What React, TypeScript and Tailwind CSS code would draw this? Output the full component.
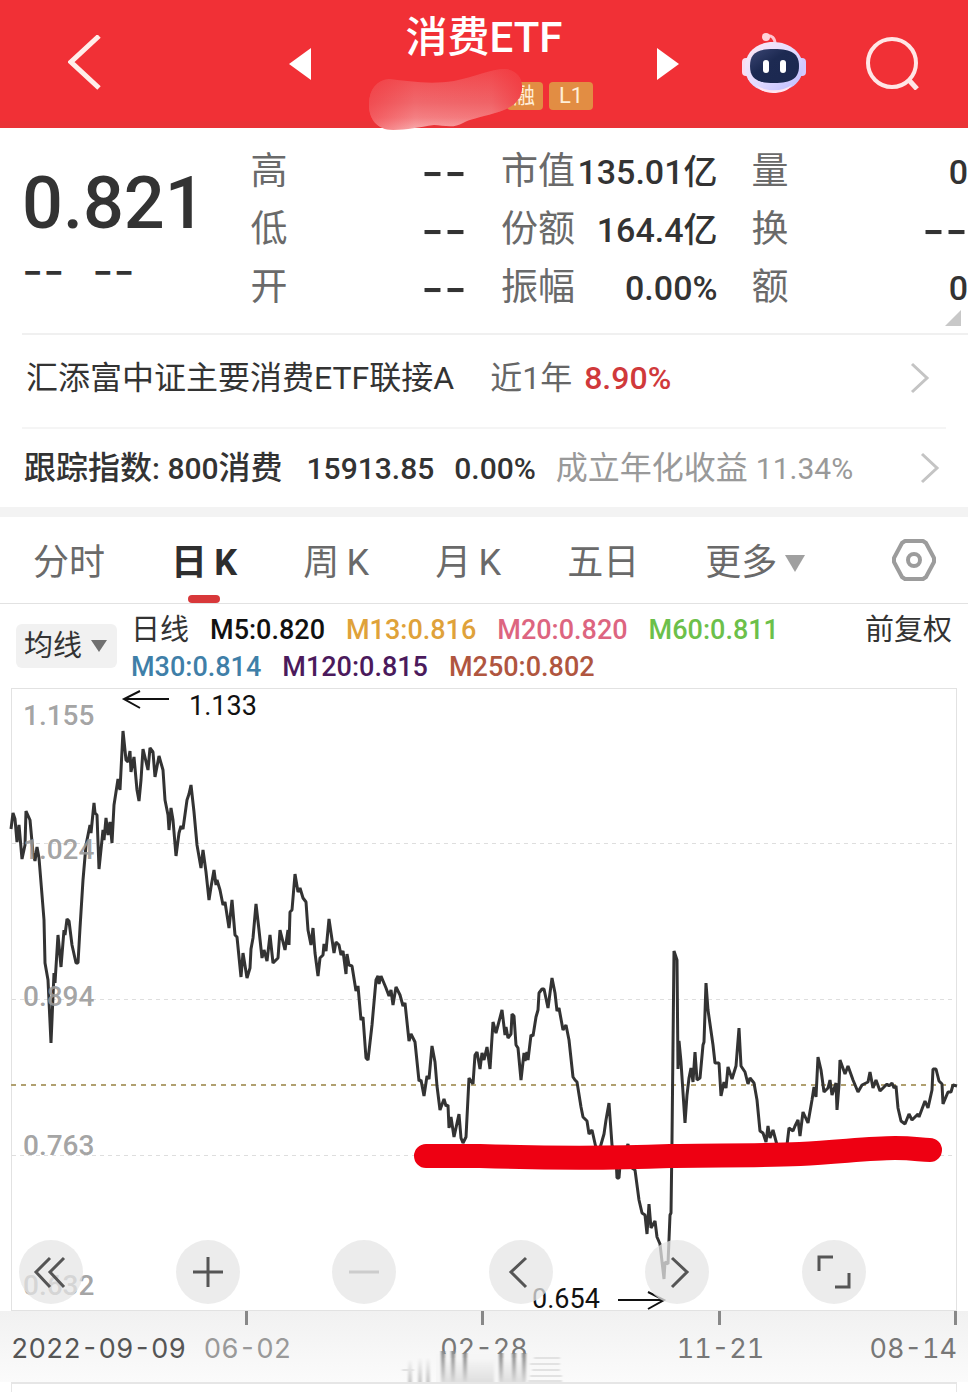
import React, { useState } from 'react';

interface Stat {
  label: string;
  value: string;
}

const statColumns: Stat[][] = [
  [
    { label: '高', value: '--' },
    { label: '低', value: '--' },
    { label: '开', value: '--' },
  ],
  [
    { label: '市值', value: '135.01亿' },
    { label: '份额', value: '164.4亿' },
    { label: '振幅', value: '0.00%' },
  ],
  [
    { label: '量', value: '0' },
    { label: '换', value: '--' },
    { label: '额', value: '0' },
  ],
];

const tabs = ['分时', '日 K', '周 K', '月 K', '五日'];

const averages = [
  [
    { text: 'M5:0.820', color: 'text-[#111111]' },
    { text: 'M13:0.816', color: 'text-[#dfa23a]' },
    { text: 'M20:0.820', color: 'text-[#dd6580]' },
    { text: 'M60:0.811', color: 'text-[#6cc04a]' },
  ],
  [
    { text: 'M30:0.814', color: 'text-[#3f7fa8]' },
    { text: 'M120:0.815', color: 'text-[#4b1a5c]' },
    { text: 'M250:0.802', color: 'text-[#b0563f]' },
  ],
];

const axisLabels = [
  { y: 725, text: '1.155' },
  { y: 859, text: '1.024' },
  { y: 1006, text: '0.894' },
  { y: 1155, text: '0.763' },
  { y: 1295, text: '0.632' },
];

const pricePoints = `
11,829 13,813 15,819 17,842 19,825 22,859 25,845 26,811 30,820 33,853 35,861 37,847 39,858 42,895 44,920 45,963
48,980 51,1043 54,973 55,983 58,935 61,967 64,930 65,935 67,919 69,921 72,945 76,963 78,963 80,928 83,880 86,845
90,825 91,833 94,803 95,813 97,815 99,869 103,830 104,840 106,818 108,835 110,822 112,843 114,805 118,779 120,790
123,731 126,760 128,762 130,751 131,772 134,757 137,790 139,801 141,780 143,749 148,770 150,748 153,752 155,777
159,756 163,770 165,800 168,815 169,830 171,808 173,820 176,856 179,833 181,826 183,829 187,800 189,794 191,785
194,812 197,845 201,868 203,850 206,872 209,900 211,887 214,870 216,885 217,880 220,890 223,905 225,902 229,928
232,900 235,935 237,937 241,977 243,953 247,978 250,968 251,949 253,938 256,904 259,930 262,958 264,950 267,961
270,935 273,963 276,960 278,958 280,930 285,950 288,930 289,945 290,912 292,910 295,874 298,892 300,888 303,898
306,902 308,930 311,945 313,928 315,953 318,976 320,958 323,955 324,944 326,951 329,919 334,953 336,942 339,945
341,955 343,951 346,974 347,954 349,965 352,966 356,991 358,986 361,1020 363,1017 366,1058 368,1060 372,1025
376,980 378,976 379,984 381,976 386,988 389,996 391,990 393,1005 396,987 400,995 403,1006 405,1003 409,1041
411,1034 415,1042 419,1081 421,1080 424,1096 427,1076 429,1079 432,1046 435,1062 437,1086 440,1110 444,1099
446,1106 448,1105 449,1128 451,1117 454,1137 459,1114 461,1138 463,1143 466,1137 469,1078 473,1084 475,1055
477,1052 480,1069 482,1053 484,1060 487,1047 490,1069 493,1022 496,1033 502,1010 505,1035 506,1027 508,1038
511,1034 512,1014 514,1016 516,1045 518,1048 521,1080 524,1053 525,1061 527,1052 528,1060 531,1035 533,1036
536,1017 538,1010 539,993 542,989 544,989 548,1008 552,978 555,993 557,1011 559,1008 563,1030 566,1025 569,1040
573,1077 575,1080 577,1082 581,1107 583,1117 587,1121 589,1134 592,1130 596,1148 600,1148 604,1134 606,1120
609,1103 612,1145 616,1158 617,1178 619,1178 620,1165 628,1144 632,1168 635,1170 639,1200 642,1213 645,1215
647,1234 649,1204 651,1228 655,1221 657,1237 660,1244 664,1279 665,1262 668,1264 670,1215 671,1213 672,1140
674,951 677,960 678,1069 679,1041 681,1062 685,1123 687,1095 689,1078 691,1068 693,1082 695,1052 697,1080
700,1078 703,1045 704,1042 706,983 708,1010 710,1024 713,1045 715,1063 719,1063 721,1096 724,1082 726,1088
728,1067 732,1079 736,1066 739,1028 741,1066 745,1072 748,1084 750,1078 754,1083 757,1100 760,1131 763,1133
766,1142 768,1126 770,1138 773,1130 777,1145 787,1145 789,1128 793,1131 795,1126 798,1120 800,1136 803,1112
808,1123 812,1100 814,1087 816,1097 818,1057 821,1070 824,1092 828,1088 830,1080 832,1095 836,1083 837,1110
839,1085 840,1060 845,1074 848,1066 853,1080 858,1092 862,1085 868,1082 870,1072 873,1088 876,1080 880,1091
887,1084 889,1086 892,1083 894,1088 896,1086 898,1108 901,1121 905,1124 909,1114 912,1120 918,1114 919,1117
925,1101 928,1108 932,1090 933,1069 936,1069 939,1081 942,1084 943,1104 948,1092 951,1092 953,1085 957,1086`;

const controls = [
  { name: '最早', d: 'M-1 -14 L-15 0 L-1 15 M13 -14 L-1 0 L13 15', muted: false },
  { name: '放大', d: 'M-15 0 H15 M0 -15 V15', muted: false },
  { name: '缩小', d: 'M-15 0 H15', muted: true },
  { name: '左移', d: 'M5 -14 L-10 0 L5 15', muted: false },
  { name: '右移', d: 'M-5 -14 L10 0 L-5 15', muted: false },
  { name: '全屏', d: 'M-15 -1 V-15 H-1 M15 1 V15 H1', muted: false },
];

const Robot = () => (
  <svg width="64" height="60" viewBox="0 0 64 60">
    <defs>
      <linearGradient id="shell" x1="0" y1="0" x2="1" y2="1">
        <stop offset="0" stopColor="#ffe9f3" />
        <stop offset="0.5" stopColor="#e3dcff" />
        <stop offset="1" stopColor="#b9b8ff" />
      </linearGradient>
      <linearGradient id="visor" x1="0" y1="0" x2="1" y2="1">
        <stop offset="0" stopColor="#3b4674" />
        <stop offset="0.4" stopColor="#1d2a52" />
        <stop offset="1" stopColor="#1b2850" />
      </linearGradient>
    </defs>
    <path d="M24 3 C30 2 33 5 33 11" fill="none" stroke="#ffc4cf" strokeWidth="3" />
    <circle cx="24" cy="4" r="4" fill="#ffd3da" />
    <rect x="0" y="25" width="9" height="18" rx="4" fill="#f9dcf0" />
    <rect x="55" y="25" width="9" height="18" rx="4" fill="#d4c8ff" />
    <path d="M31 9 C48 9 61 20 61 34 C61 49 48 59 31 59 C14 59 3 49 3 34 C3 20 14 9 31 9Z" fill="url(#shell)" />
    <path d="M14 52 C24 59 40 59 50 52 C46 58 39 60 31 60 C24 60 18 58 14 52Z" fill="#ffe4f0" />
    <path d="M32 16 C50 16 57 21 57 33 C57 45 50 50 32 50 C14 50 8 45 8 33 C8 21 14 16 32 16Z" fill="url(#visor)" />
    <rect x="21" y="27" width="6" height="13" rx="3" fill="#fff" />
    <rect x="38" y="27" width="6" height="13" rx="3" fill="#fff" />
  </svg>
);

const Chevron = ({ className = '' }: { className?: string }) => (
  <svg width="20" height="32" viewBox="0 0 20 32" className={className}>
    <path d="M2 2 L17 16 L2 30" fill="none" stroke="#c4c4c4" strokeWidth="3" />
  </svg>
);

const StatValue = ({ value }: { value: string }) =>
  value === '--' ? (
    <dd className="font-['Inter',sans-serif] text-[50px]">{value}</dd>
  ) : (
    <dd className="text-[34px] font-medium">{value}</dd>
  );

const Header = () => (
  <header className="relative grid h-32 grid-cols-[1fr_390px_1fr] items-center bg-[linear-gradient(#f13036_120px,#ea3337_122px)] text-white">
    <div className="pl-[68px]">
      <button aria-label="返回" className="block">
        <svg width="34" height="58" viewBox="0 0 34 58">
          <path d="M31 1 L3 27 L31 53" fill="none" stroke="#ffeeea" strokeWidth="5" />
        </svg>
      </button>
    </div>
    <div className="flex items-center justify-between">
      <button aria-label="上一个">
        <svg width="22" height="32" viewBox="0 0 22 32">
          <path d="M22 0 V32 L0 16Z" fill="#fff" />
        </svg>
      </button>
      <div className="flex flex-col items-center gap-5 pb-1">
        <h1 className="text-[42px] leading-[48px] font-medium">消费ETF</h1>
        <div className="flex w-[218px] justify-end gap-[6px] text-[22px] leading-7 text-[#ffeed8]">
          <span className="w-9 rounded-sm bg-[#e28d43] pr-2 text-right">融</span>
          <span className="w-11 rounded-sm bg-[#e28d43] text-center">L1</span>
        </div>
      </div>
      <button aria-label="下一个">
        <svg width="22" height="32" viewBox="0 0 22 32">
          <path d="M0 0 V32 L22 16Z" fill="#fff" />
        </svg>
      </button>
    </div>
    <div className="flex items-center justify-between pr-12 pb-[3px] pl-[63px]">
      <button aria-label="助手">
        <Robot />
      </button>
      <button aria-label="搜索">
        <svg width="54" height="54" viewBox="0 0 54 54">
          <circle cx="26" cy="27" r="24" fill="none" stroke="#ffe6e6" strokeWidth="4" />
          <path d="M42 43 L51 53" stroke="#ffe6e6" strokeWidth="5" />
        </svg>
      </button>
    </div>
    {/* smudge over the fund code */}
    <svg width="154" height="62" viewBox="0 0 154 62" className="absolute top-[69px] left-1/2 -ml-[115px]">
      <defs>
        <linearGradient id="smudge" x1="0" y1="0" x2="0" y2="1">
          <stop offset="0" stopColor="#f2484d" />
          <stop offset="0.55" stopColor="#f0686c" />
          <stop offset="0.8" stopColor="#f48083" />
          <stop offset="1" stopColor="#f8abad" />
        </linearGradient>
        <linearGradient id="smudgeFade" x1="0" y1="0" x2="1" y2="0">
          <stop offset="0" stopColor="#f13036" stopOpacity="0.5" />
          <stop offset="0.3" stopColor="#f13036" stopOpacity="0" />
          <stop offset="0.8" stopColor="#f13036" stopOpacity="0.1" />
          <stop offset="1" stopColor="#f13036" stopOpacity="0.6" />
        </linearGradient>
      </defs>
      <path
        d="M20 10 C40 12 60 16 85 12 C105 8 122 0 136 0 C148 1 154 10 153 20 C151 34 142 39 126 44 C110 49 100 50 94 54 C84 60 74 56 65 56 C50 58 38 61 24 61 C8 61 0 50 0 36 C0 20 8 11 20 10Z"
        fill="url(#smudge)"
      />
      <path
        d="M20 10 C40 12 60 16 85 12 C105 8 122 0 136 0 C148 1 154 10 153 20 C151 34 142 39 126 44 C110 49 100 50 94 54 C84 60 74 56 65 56 C50 58 38 61 24 61 C8 61 0 50 0 36 C0 20 8 11 20 10Z"
        fill="url(#smudgeFade)"
      />
    </svg>
  </header>
);

const PriceChart = () => (
  <div className="relative mx-[11px]">
    <svg viewBox="11 688 946 623" className="block w-full overflow-visible" role="img" aria-label="日K">
      <rect x="11.5" y="688.5" width="945" height="622" fill="none" stroke="#e2e2e2" />
      <g stroke="#dedede" strokeDasharray="4 4">
        <path d="M12 843.5 H956" />
        <path d="M12 999.5 H956" />
        <path d="M12 1155.5 H956" />
      </g>
      <path d="M11 1085 H956" stroke="#b0a070" strokeWidth="2" strokeDasharray="5 5" />
      <polyline points={pricePoints} fill="none" stroke="#333" strokeWidth="3" strokeLinejoin="bevel" />
      <g fontSize="28" fontWeight="500" fill="#999" fillOpacity="0.9">
        {axisLabels.map((label) => (
          <text key={label.text} x="23" y={label.y}>
            {label.text}
          </text>
        ))}
      </g>
      <g fontSize="27" fill="#111">
        <text x="189" y="715">1.133</text>
        <text x="532" y="1308">0.654</text>
      </g>
      <g fill="none" stroke="#111" strokeWidth="2">
        <path d="M169 699 H124 M140 691 L124 699 L140 708" />
        <path d="M618 1300 H664 M648 1292 L664 1300 L648 1309" />
      </g>
      <path
        d="M426 1156 L480 1156 C540 1158 620 1158 670 1156 C710 1155 760 1156 800 1154 C840 1152 870 1148 895 1148 C915 1148 920 1150 930 1150"
        fill="none"
        stroke="#ee0012"
        strokeWidth="24"
        strokeLinecap="round"
        strokeLinejoin="round"
      />
    </svg>
    <div className="absolute right-[91px] bottom-[7px] left-2 flex justify-between">
      {controls.map((control) => (
        <button key={control.name} aria-label={control.name} className="size-16 rounded-full bg-[#e6e6e6]/75">
          <svg viewBox="-32 -32 64 64" className="size-16">
            <path d={control.d} fill="none" stroke={control.muted ? '#cccccc' : '#555555'} strokeWidth="3" />
          </svg>
        </button>
      ))}
    </div>
  </div>
);

const DateAxis = () => (
  <div className="bg-linear-to-b from-[#f1f1f1] to-[#fbfbfb]">
    <div className="relative mx-[11px] h-[71px] font-['Inter',sans-serif] text-[27px] leading-10 text-[#777] tabular-nums">
      <div className="grid h-[14px] grid-cols-4">
        {[1, 2, 3, 4].map((tick) => (
          <i key={tick} className="border-r-3 border-[#888]" />
        ))}
      </div>
      <span className="absolute top-[18px] left-0 text-[#555]">2022-09-09</span>
      <span className="absolute top-[18px] left-1/4 -translate-x-1/2 text-[#999]">06-02</span>
      <span className="absolute top-[18px] left-1/2 -translate-x-1/2">02-28</span>
      <span className="absolute top-[18px] left-3/4 -translate-x-1/2">11-21</span>
      <span className="absolute top-[18px] right-0">08-14</span>
      {/* smeared lower half of the middle date */}
      <svg width="170" height="34" viewBox="0 0 170 34" className="absolute top-[37px] left-1/2 -ml-[84px]">
        <defs>
          <linearGradient id="streak" x1="0" y1="0" x2="0" y2="1">
            <stop offset="0" stopColor="#888" />
            <stop offset="0.5" stopColor="#b4b4b4" />
            <stop offset="1" stopColor="#dadada" />
          </linearGradient>
          <linearGradient id="streakRise" x1="0" y1="0" x2="0" y2="1">
            <stop offset="0" stopColor="#f6f6f6" />
            <stop offset="1" stopColor="#c8c8c8" />
          </linearGradient>
          <filter id="soft">
            <feGaussianBlur stdDeviation="1 0" />
          </filter>
        </defs>
        <rect x="36" y="6" width="94" height="28" fill="#f6f6f6" />
        <g filter="url(#soft)">
          <g fill="url(#streakRise)">
            <rect x="8" y="12" width="4" height="22" />
            <rect x="18" y="10" width="4" height="24" />
            <rect x="26" y="10" width="4" height="24" />
            <rect x="44" y="10" width="50" height="24" fillOpacity="0.5" />
            <rect x="100" y="10" width="22" height="24" fillOpacity="0.5" />
          </g>
          <g fill="url(#streak)">
            <rect x="41" y="3" width="4" height="31" />
            <rect x="51" y="3" width="4" height="31" />
            <rect x="63" y="5" width="4" height="29" />
            <rect x="99" y="5" width="4" height="29" />
            <rect x="112" y="5" width="4" height="29" />
            <rect x="122" y="5" width="4" height="29" />
          </g>
          <path d="M2 22 H14 M134 10 H160 M130 16 H160 M132 22 H160 M130 28 H162 M128 33 H162" stroke="#e2e2e2" strokeWidth="2" />
        </g>
      </svg>
    </div>
  </div>
);

const App: React.FC = () => {
  const [activeTab, setActiveTab] = useState(1);

  return (
    <div className="min-h-screen overflow-x-hidden bg-white font-['Roboto','Noto_Sans_CJK_SC',sans-serif] text-[#333]">
      <Header />

      <section className="relative grid grid-cols-4 gap-x-[34px] pt-[15px] pb-4">
        <div className="pt-[23px] pl-[22px]">
          <p className="text-[72px] leading-[76px] font-medium">0.821</p>
          <p className="flex gap-7 font-['Inter',sans-serif] text-[46px] leading-[56px]">
            <span>--</span>
            <span>--</span>
          </p>
        </div>
        {statColumns.map((column, i) => (
          <dl key={i}>
            {column.map((stat) => (
              <div key={stat.label} className="flex h-[58px] items-center justify-between whitespace-nowrap">
                <dt className="text-[37px] text-[#6a6a6a]">{stat.label}</dt>
                <StatValue value={stat.value} />
              </div>
            ))}
          </dl>
        ))}
        <svg width="16" height="16" viewBox="0 0 16 16" className="absolute right-[7px] bottom-[7px]">
          <path d="M16 0 V16 H0Z" fill="#c8c8c8" />
        </svg>
      </section>

      <a href="#fund" className="ml-[22px] flex h-[94px] items-center border-t-2 border-[#f0f0f0] pr-[38px] pb-[6px] pl-1 text-[32px] whitespace-nowrap">
        <span>汇添富中证主要消费ETF联接A</span>
        <span className="ml-9 text-[#666]">近1年</span>
        <span className="ml-3 font-medium text-[#d0393b]">8.90%</span>
        <Chevron className="ml-auto" />
      </a>
      <a href="#index" className="mx-[22px] flex h-20 items-center border-t-2 border-[#f5f5f5] pr-[6px] pl-[2px] text-[30px] whitespace-nowrap">
        <span className="font-medium">
          <span className="text-[32px]">跟踪指数</span>: 800<span className="text-[32px]">消费</span>
        </span>
        <span className="ml-6 font-medium">15913.85</span>
        <span className="ml-5 font-medium">0.00%</span>
        <span className="ml-5 text-[32px] text-[#999]">成立年化收益</span>
        <span className="ml-2 text-[#999]">11.34%</span>
        <Chevron className="ml-auto" />
      </a>

      <div className="h-[10px] bg-[#f3f3f3]" />

      <nav className="flex h-[87px] gap-[66px] border-b border-[#e2e2e2] pr-8 pl-[33px] text-[36px] whitespace-nowrap text-[#6a6a6a]">
        {tabs.map((tab, i) => (
          <button
            key={tab}
            onClick={() => setActiveTab(i)}
            className={`relative pt-[6px] ${activeTab === i ? 'font-bold text-[#2e2e2e]' : ''}`}
          >
            {tab.replace(' ', '\u2009')}
            {activeTab === i && (
              <span className="absolute bottom-0 left-1/2 h-2 w-8 -translate-x-1/2 rounded-full bg-[#d8383a]" />
            )}
          </button>
        ))}
        <button className="flex items-center gap-2 pt-[6px]">
          更多
          <svg width="20" height="17" viewBox="0 0 20 17">
            <path d="M0 0 H20 L10 17Z" fill="#a0a0a0" />
          </svg>
        </button>
        <button aria-label="设置" className="ml-auto">
          <svg width="44" height="42" viewBox="0 0 44 42">
            <path d="M13 2 H31 L34 4 L42 19 V23 L34 38 L31 40 H13 L10 38 L2 23 V19 L10 4Z" fill="none" stroke="#9c9c9c" strokeWidth="4" strokeLinejoin="round" />
            <circle cx="22" cy="21" r="6" fill="none" stroke="#9c9c9c" strokeWidth="4" />
          </svg>
        </button>
      </nav>

      <section className="flex items-start pt-2 pr-4 pb-[2px] pl-4 text-[29px] leading-[37px] whitespace-nowrap">
        <div className="relative mt-3 mr-[14px]">
          <select aria-label="指标" className="h-11 w-[101px] appearance-none rounded-md bg-[#f1f1f1] pl-2">
            <option>均线</option>
          </select>
          <svg width="16" height="12" viewBox="0 0 16 12" className="pointer-events-none absolute top-4 right-[10px]">
            <path d="M0 0 H16 L8 12Z" fill="#707070" />
          </svg>
        </div>
        <div className="text-[27px] font-medium">
          {averages.map((row, i) => (
            <div key={i} className="flex gap-[21px]">
              {i === 0 && <span className="text-[29px] font-normal">日线</span>}
              {row.map((item) => (
                <span key={item.text} className={item.color}>
                  {item.text}
                </span>
              ))}
            </div>
          ))}
        </div>
        <span className="ml-auto">前复权</span>
      </section>

      <PriceChart />
      <DateAxis />
      <div className="mx-[11px] h-[10px] border-x border-t-2 border-[#e6e6e6]" />
    </div>
  );
};

export default App;
